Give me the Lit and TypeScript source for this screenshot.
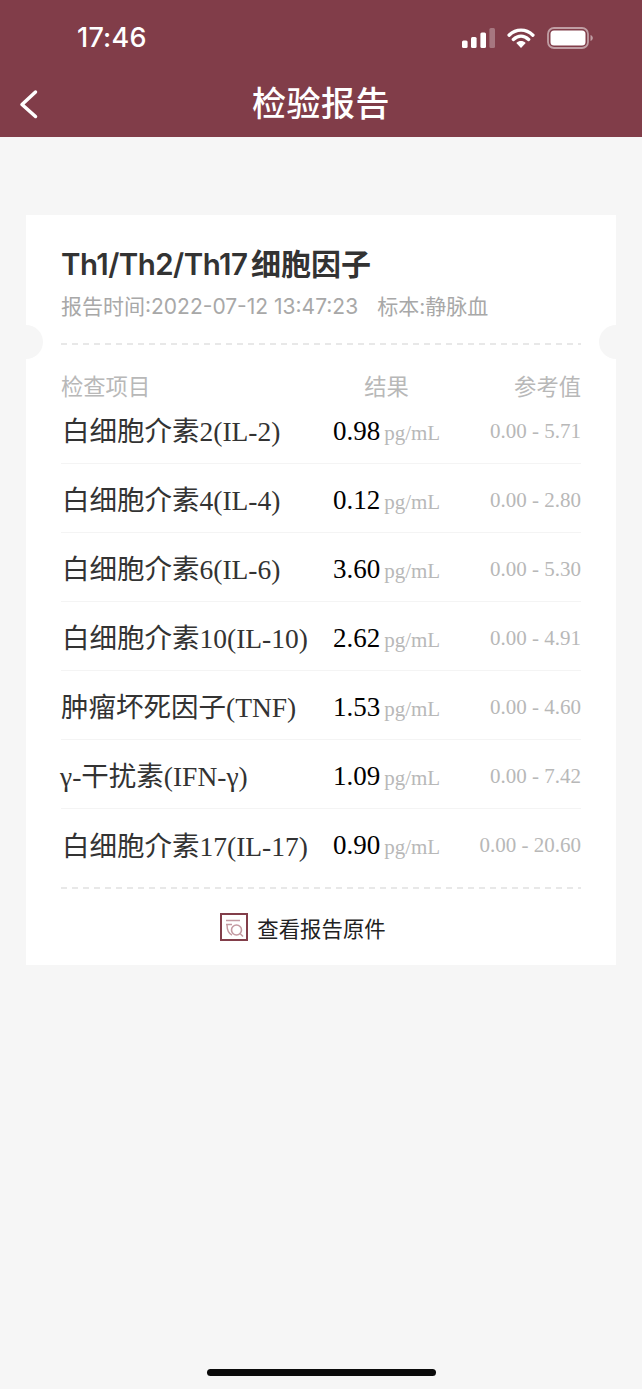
import { LitElement, html, css, svg } from "lit";
import { customElement } from "lit/decorators.js";

const rows = [
  ["白细胞介素2(IL-2)", "0.98", "0.00 - 5.71"],
  ["白细胞介素4(IL-4)", "0.12", "0.00 - 2.80"],
  ["白细胞介素6(IL-6)", "3.60", "0.00 - 5.30"],
  ["白细胞介素10(IL-10)", "2.62", "0.00 - 4.91"],
  ["肿瘤坏死因子(TNF)", "1.53", "0.00 - 4.60"],
  ["γ-干扰素(IFN-γ)", "1.09", "0.00 - 7.42"],
  ["白细胞介素17(IL-17)", "0.90", "0.00 - 20.60"],
];

@customElement("app-root")
export class AppRoot extends LitElement {
  static styles = css`
    :host {
      display: block;
      width: 642px;
      height: 1389px;
      background: #f6f6f6;
      font-family: "Inter", "Noto Sans CJK SC", sans-serif;
      position: relative;
      overflow: hidden;
    }
    .header {
      background: #813d49;
      height: 137px;
      color: #fff;
      display: flex;
      flex-direction: column;
    }
    .status {
      height: 76px;
      display: flex;
      align-items: center;
      justify-content: space-between;
      padding: 0 49px 0 77px;
    }
    .time {
      font-size: 27px;
      font-weight: 500;
      line-height: 30px;
      letter-spacing: 0.2px;
    }
    .status-icons {
      display: flex;
      align-items: center;
      gap: 12px;
    }
    .nav {
      height: 61px;
      display: flex;
      align-items: center;
      justify-content: center;
      position: relative;
    }
    .back {
      position: absolute;
      left: 17px;
      top: 13px;
    }
    .nav-title {
      font-size: 34px;
      font-weight: 500;
      line-height: 56px;
      margin-bottom: 6px;
      letter-spacing: 0.5px;
    }
    .card {
      margin: 78px 26px 0;
      background: #fff;
      height: 750px;
      position: relative;
      box-sizing: border-box;
      padding: 28px 35px 0;
    }
    .notch {
      position: absolute;
      width: 34px;
      height: 34px;
      border-radius: 50%;
      background: #f6f6f6;
      top: 110px;
    }
    .notch.l { left: -17px; }
    .notch.r { right: -17px; }
    .title {
      font-size: 30px;
      font-weight: 600;
      line-height: 42px;
      color: #333;
      white-space: nowrap;
      word-spacing: -4px;
    }
    .lat { font-size: 29.5px; letter-spacing: -0.55px; }
    .sub {
      font-size: 21px;
      line-height: 30px;
      margin-top: 7px;
      color: #a8a8a8;
      white-space: nowrap;
      display: flex;
      gap: 19px;
    }
    .dash {
      height: 2px;
      background: repeating-linear-gradient(90deg, #e8e8e8 0 6px, transparent 6px 11px);
    }
    .dash.top { margin-top: 21px; }
    .columns, .row {
      display: grid;
      grid-template-columns: 1fr 107px 141px;
      align-items: center;
    }
    .columns {
      height: 26px;
      margin-top: 24px;
      font-size: 22.3px;
      color: #b8b8b8;
    }
    .columns .c { text-align: center; }
    .columns .r { text-align: right; }
    .row {
      height: 69px;
      box-sizing: border-box;
      padding-top: 4px;
      border-bottom: 1px solid #f4f4f4;
      font-family: "Liberation Serif", "Noto Sans CJK SC", serif;
      white-space: nowrap;
    }
    .row.last { border-bottom: none; }
    .name {
      font-size: 27.5px;
      color: #333;
      padding-left: 2px;
      margin-bottom: 4px;
      margin-left: -1px;
    }
    .name.flush { padding-left: 1px; }
    .name.gamma { padding-left: 0; }
    .result {
      display: flex;
      align-items: baseline;
      justify-content: center;
      gap: 4px;
    }
    .val { font-size: 27px; color: #000; }
    .unit { font-size: 21px; color: #b8b8b8; }
    .ref { font-size: 21px; color: #b8b8b8; text-align: right; }
    .dash.bottom { margin-top: 9px; }
    .orig {
      height: 76px;
      display: flex;
      align-items: center;
      justify-content: center;
      gap: 9px;
      font-size: 21.4px;
      color: #222;
      padding-right: 36px;
    }
    .home {
      position: absolute;
      left: 207px;
      bottom: 13px;
      width: 229px;
      height: 7px;
      border-radius: 4px;
      background: #0a0a0a;
    }
  `;

  render() {
    return html`
      <div class="header">
        <div class="status">
          <span class="time">17:46</span>
          <span class="status-icons">
            <svg width="33" height="20" viewBox="0 0 33 20">
              <rect x="0" y="12.5" width="5.6" height="7.5" rx="1.5" fill="#fff"/>
              <rect x="9" y="9" width="5.6" height="11" rx="1.5" fill="#fff"/>
              <rect x="18.4" y="4.5" width="5.6" height="15.5" rx="1.5" fill="#fff"/>
              <rect x="27.4" y="0" width="5.6" height="20" rx="1.5" fill="#fff" fill-opacity=".3"/>
            </svg>
            <svg width="28" height="20" viewBox="0 0 29 21">
              <path d="M2 7.5 C9.5 .5 19.5 .5 27 7.5 M6.5 12 C11.5 7.5 17.5 7.5 22.5 12" fill="none" stroke="#fff" stroke-width="3.6" stroke-linecap="round"/>
              <path d="M14.5 21 L9.6 15.8 C12.5 13 16.5 13 19.4 15.8 Z" fill="#fff"/>
            </svg>
            <svg width="46" height="22" viewBox="0 0 46 22">
              <rect x="1" y="1" width="40" height="20" rx="6" fill="none" stroke="#fff" stroke-opacity=".5" stroke-width="1.8"/>
              <rect x="3.5" y="3.5" width="35" height="15" rx="3.5" fill="#fff"/>
              <path d="M43.5 8 C45 8.6 45.8 9.7 45.8 11 C45.8 12.3 45 13.4 43.5 14 Z" fill="#fff" fill-opacity=".5"/>
            </svg>
          </span>
        </div>
        <div class="nav">
          <svg class="back" width="22" height="32" viewBox="0 0 22 32">
            <path d="M18.5 3 L5 15.5 L18.5 27.5" fill="none" stroke="#fff" stroke-width="3.5" stroke-linecap="round" stroke-linejoin="round"/>
          </svg>
          <span class="nav-title">检验报告</span>
        </div>
      </div>
      <div class="card">
        <span class="notch l"></span>
        <span class="notch r"></span>
        <div class="title"><span class="lat">Th1/Th2/Th17</span> <span>细胞因子</span></div>
        <div class="sub"><span>报告时间:2022-07-12 13:47:23</span><span>标本:静脉血</span></div>
        <div class="dash top"></div>
        <div class="columns"><span>检查项目</span><span class="c">结果</span><span class="r">参考值</span></div>
        ${rows.map(
          ([n, v, r], i) => html`
            <div class="row ${i === rows.length - 1 ? "last" : ""}">
              <span class="name ${n.startsWith("γ") ? "gamma" : n.startsWith("肿") ? "flush" : ""}">${n}</span>
              <span class="result"><span class="val">${v}</span><span class="unit">pg/mL</span></span>
              <span class="ref">${r}</span>
            </div>
          `
        )}
        <div class="dash bottom"></div>
        <div class="orig">
          ${svg`<svg width="28" height="28" viewBox="0 0 28 28">
            <rect x="1" y="1" width="26" height="26" fill="none" stroke="#823e4a" stroke-width="2"/>
            <path d="M6 7.5 H20 M6 11.5 H12" fill="none" stroke="#c49aa2" stroke-width="1.4"/>
            <circle cx="16.5" cy="17" r="5" fill="none" stroke="#c49aa2" stroke-width="1.6"/>
            <path d="M20 20.5 L23 23.5" stroke="#c49aa2" stroke-width="1.6"/>
            <path d="M7 11.5 C7 17 8.5 20.5 12 22" fill="none" stroke="#c49aa2" stroke-width="1.4"/>
          </svg>`}
          <span>查看报告原件</span>
        </div>
      </div>
      <div class="home"></div>
    `;
  }
}
